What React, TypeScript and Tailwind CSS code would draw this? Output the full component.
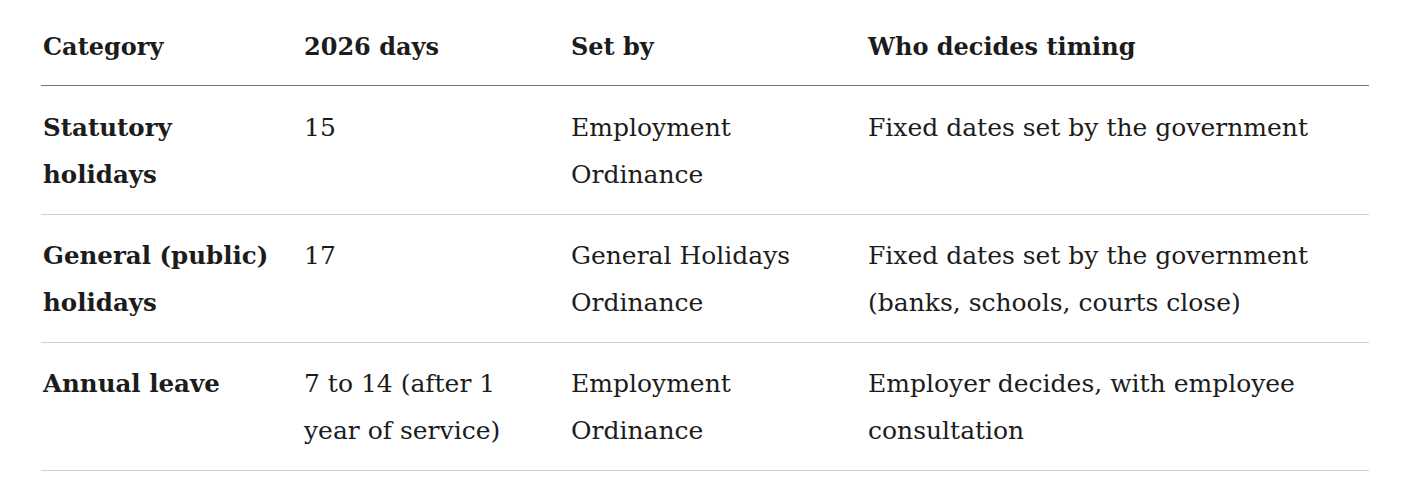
import React from "react";

const rows = [
  ["Statutory holidays", "15", "Employment Ordinance", "Fixed dates set by the government"],
  ["General (public) holidays", "17", "General Holidays Ordinance", "Fixed dates set by the government (banks, schools, courts close)"],
  ["Annual leave", "7 to 14 (after 1 year of service)", "Employment Ordinance", "Employer decides, with employee consultation"],
];

export default function App() {
  return (
    <div className="min-h-screen bg-white pl-[41px] pr-[41px] pt-[23px] text-[#1c1c1c]" style={{ fontFamily: '"DejaVu Serif", serif' }}>
      <div className="w-[1328px]">
        <div className="grid grid-cols-[263px_267px_297px_1fr] border-b border-[#767676] text-[24px] font-bold leading-[47px] pb-[15px]">
          <div className="pl-[2px] pr-4">Category</div>
          <div className="pr-4">2026 days</div>
          <div className="pr-4">Set by</div>
          <div>Who decides timing</div>
        </div>
        {rows.map((r, i) => (
          <div key={i} className={`grid grid-cols-[263px_267px_297px_1fr] border-b border-[#cfcfcf] pb-[16px] text-[25px] leading-[47px] ${i === 0 ? "pt-[17.5px]" : "pt-[17px]"}`}>
            <div className="pl-[2px] pr-4 text-[24.5px] font-bold">{r[0]}</div>
            <div className="pr-4">{r[1]}</div>
            <div className="pr-4">{r[2]}</div>
            <div className="pr-4">{r[3]}</div>
          </div>
        ))}
      </div>
    </div>
  );
}
